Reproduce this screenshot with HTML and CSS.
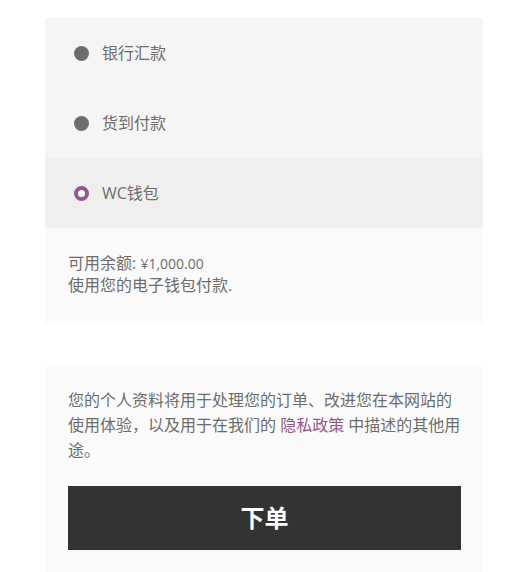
FILE: index.html
```html
<html>
  <head>
    <title>结账</title>
    <link rel="stylesheet" href="styles.css">
  </head>
  <body>
    <div class="checkout">
      <ul class="methods">
        <li class="method">
          <span class="radio"></span>
          <span class="method-label">银行汇款</span>
        </li>
        <li class="method">
          <span class="radio"></span>
          <span class="method-label">货到付款</span>
        </li>
        <li class="method selected">
          <span class="radio"></span>
          <span class="method-label">WC钱包</span>
        </li>
      </ul>
      <div class="method-box">
        <p>可用余额: <span class="amount">¥1,000.00</span></p>
        <p>使用您的电子钱包付款.</p>
      </div>

      <div class="place-order">
        <p class="privacy">您的个人资料将用于处理您的订单、改进您在本网站的使用体验，以及用于在我们的 <a href="#">隐私政策</a> 中描述的其他用途。</p>
        <button class="order-button">下单</button>
      </div>
    </div>
  </body>
</html>
```

FILE: styles.css
```css
/* Checkout payment block */
body {
  margin: 0;
  background-color: #fff;
  font-family: "Open Sans", "Noto Sans CJK SC", sans-serif;
  color: #6d6d6d;
}

.checkout {
  width: 438px;
  margin: 18px 0 0 45px;
}

.methods {
  list-style: none;
  margin: 0;
  padding: 0;
  background-color: #f5f5f5;
}

.method {
  display: flex;
  align-items: center;
  height: 70px;
  padding-left: 29px;
  font-size: 16px;
}

.method.selected {
  background-color: #efefef;
}

.radio {
  width: 15px;
  height: 15px;
  border-radius: 50%;
  background-color: #6d6d6d;
  margin-right: 13px;
  box-sizing: border-box;
}

.selected .radio {
  background-color: #fff;
  border: 4px solid #96588a;
}

.method-label {
  line-height: 18px;
}

.method-box {
  background-color: #fafafa;
  padding: 24px 23px 27px;
  font-size: 16px;
  line-height: 22px;
}

.method-box p {
  margin: 0;
}

.amount {
  font-size: 14px;
  line-height: 16px;
}

.place-order {
  margin-top: 43px;
  background-color: #fafafa;
  padding: 22px 22px 30px 23px;
}

.privacy {
  margin: 0 0 23px;
  font-size: 16px;
  line-height: 25px;
}

.privacy a {
  color: #96588a;
  text-decoration: none;
}

.order-button {
  display: block;
  width: 100%;
  height: 64px;
  padding: 0 0 3px;
  border: none;
  background-color: #333;
  color: #fff;
  font-family: "Open Sans", "Noto Sans CJK SC", sans-serif;
  font-size: 24px;
  font-weight: bold;
  cursor: pointer;
}
```
